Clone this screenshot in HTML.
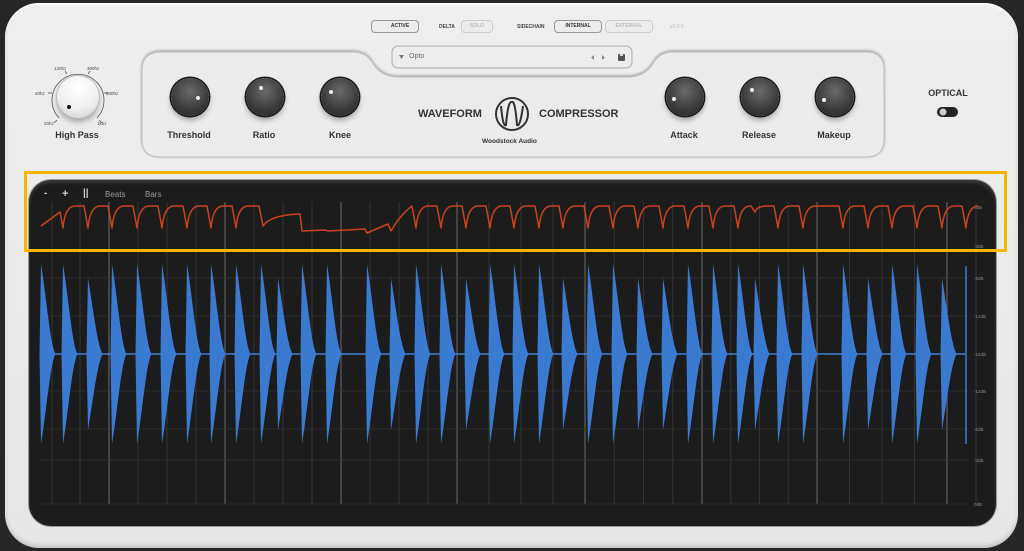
<!DOCTYPE html>
<html><head><meta charset="utf-8">
<style>
html,body{margin:0;padding:0;width:1024px;height:551px;overflow:hidden;background:#262626;font-family:"Liberation Sans",sans-serif}
.abs{position:absolute}
#body{left:5px;top:3px;width:1013px;height:545px;border-radius:34px;background:linear-gradient(#eeeeee,#e6e6e6);box-shadow:inset 0 -3px 4px rgba(0,0,0,.15),inset 0 2px 2px #fff}
.lbl{font-size:9px;font-weight:bold;color:#333;text-align:center;width:80px;margin-left:-40px}
.knob{width:38px;height:38px;border-radius:50%;margin:-19px 0 0 -19px;background:radial-gradient(circle at 50% 35%,#6a6a6a,#3a3a3a 60%,#222);box-shadow:0 0 0 1.5px #1a1a1a,0 4px 6px rgba(0,0,0,.35)}
.dot{position:absolute;width:4px;height:4px;border-radius:50%;background:#eee}
.btn{border:1px solid #999;border-radius:4px;height:11px;font-size:5px;font-weight:bold;color:#333;text-align:center;line-height:11px;background:#ececec}
.small{font-size:5px;font-weight:bold;color:#444}
.hz{font-size:4.5px;color:#444}
</style></head><body>
<div id="body" class="abs"></div>
<svg class="abs" style="left:0;top:0" width="1024" height="551">
 <defs><filter id="sh" x="-5%" y="-20%" width="110%" height="140%"><feDropShadow dx="0" dy="-1" stdDeviation="1.2" flood-color="#000" flood-opacity=".35"/></filter></defs>
 <path d="M162 52 L352 52 Q366 52 372 62 Q380 76 396 77 L630 77 Q646 76 654 62 Q660 52 674 52 L866 52 Q884 52 884 70 L884 140 Q884 157 866 157 L160 157 Q142 157 142 140 L142 70 Q142 52 162 52 Z" fill="#ebebeb" stroke="#bdbdbd" stroke-width="1" filter="url(#sh)"/>
 <rect x="392" y="46" width="240" height="22" rx="6" fill="#ececec" stroke="#aaa" stroke-width="1"/>
 <path d="M399 55 L404 55 L401.5 59 Z" fill="#777"/>
 <path d="M594 55 L591 57.5 L594 60 Z M602 55 L605 57.5 L602 60 Z" fill="#888"/>
 <rect x="618" y="54" width="7" height="7" rx="1" fill="#555"/><rect x="620" y="54" width="3" height="2" fill="#ddd"/>
 <circle cx="512" cy="114" r="16" fill="none" stroke="#333" stroke-width="2"/>
 <path d="M501 106 Q503 128 506 125 Q508 100 512 102 Q515 100 517 125 Q520 128 523 106" fill="none" stroke="#333" stroke-width="2"/>
 <path d="M59 118 A26 26 0 1 1 97 118" fill="none" stroke="#555" stroke-width="0.8"/>
 <g stroke="#555" stroke-width="0.8"><line x1="57" y1="120" x2="54" y2="123"/><line x1="52" y1="93" x2="48" y2="93"/><line x1="67" y1="74" x2="65" y2="71"/><line x1="88" y1="74" x2="90" y2="71"/><line x1="104" y1="93" x2="108" y2="93"/><line x1="99" y1="120" x2="102" y2="123"/></g>
 <rect x="937" y="107" width="21" height="10" rx="5" fill="#222"/><circle cx="943" cy="112" r="3.5" fill="#ccc"/>
 <path d="M376.5 24.5 A3.2 3.2 0 1 0 380.5 24.5 M378.5 23 L378.5 27" fill="none" stroke="#e0533a" stroke-width="1"/>
</svg>
<div class="abs btn" style="left:371px;top:20px;width:46px;text-indent:10px">ACTIVE</div>
<div class="abs small" style="left:439px;top:24px">DELTA</div>
<div class="abs btn" style="left:461px;top:20px;width:30px;color:#bbb;border-color:#ccc">SOLO</div>
<div class="abs small" style="left:517px;top:24px">SIDECHAIN</div>
<div class="abs btn" style="left:554px;top:20px;width:46px">INTERNAL</div>
<div class="abs btn" style="left:605px;top:20px;width:46px;color:#bbb;border-color:#ccc">EXTERNAL</div>
<div class="abs small" style="left:670px;top:24px;color:#bbb;font-weight:normal">v1.0.9</div>
<div class="abs" style="left:409px;top:53px;font-size:7px;color:#666">Opto</div>
<div class="abs" style="left:418px;top:108px;font-size:11px;font-weight:bold;color:#333">WAVEFORM</div>
<div class="abs" style="left:539px;top:108px;font-size:11px;font-weight:bold;color:#333">COMPRESSOR</div>
<div class="abs" style="left:482px;top:138px;font-size:6.5px;font-weight:bold;color:#333">Woodstock Audio</div>
<div class="abs" style="left:57px;top:76px;width:42px;height:42px;border-radius:50%;background:radial-gradient(circle at 50% 30%,#fff,#f0f0f0 55%,#c8c8c8);box-shadow:0 0 0 1px #bbb,0 4px 6px rgba(0,0,0,.3)"><div class="dot" style="left:10px;top:29px;background:#111"></div></div>
<div class="abs hz" style="left:44px;top:121px">20hz</div>
<div class="abs hz" style="left:35px;top:91px">40hz</div>
<div class="abs hz" style="left:54px;top:66px">120hz</div>
<div class="abs hz" style="left:87px;top:66px">300hz</div>
<div class="abs hz" style="left:106px;top:91px">500hz</div>
<div class="abs hz" style="left:97px;top:121px">1khz</div>
<div class="abs lbl" style="left:77px;top:130px">High Pass</div>
<div class="abs" style="left:190px;top:97px"><div class="knob" style="position:relative"><div class="dot" style="left:25px;top:18px"></div></div></div>
<div class="abs" style="left:265px;top:97px"><div class="knob" style="position:relative"><div class="dot" style="left:13px;top:8px"></div></div></div>
<div class="abs" style="left:340px;top:97px"><div class="knob" style="position:relative"><div class="dot" style="left:8px;top:12px"></div></div></div>
<div class="abs" style="left:685px;top:97px"><div class="knob" style="position:relative"><div class="dot" style="left:6px;top:19px"></div></div></div>
<div class="abs" style="left:760px;top:97px"><div class="knob" style="position:relative"><div class="dot" style="left:9px;top:10px"></div></div></div>
<div class="abs" style="left:835px;top:97px"><div class="knob" style="position:relative"><div class="dot" style="left:6px;top:20px"></div></div></div>
<div class="abs lbl" style="left:189px;top:130px">Threshold</div>
<div class="abs lbl" style="left:264px;top:130px">Ratio</div>
<div class="abs lbl" style="left:340px;top:130px">Knee</div>
<div class="abs lbl" style="left:684px;top:130px">Attack</div>
<div class="abs lbl" style="left:759px;top:130px">Release</div>
<div class="abs lbl" style="left:834px;top:130px">Makeup</div>
<div class="abs lbl" style="left:948px;top:88px">OPTICAL</div>
<div class="abs" style="left:29px;top:180px;width:967px;height:346px;border-radius:22px;background:#1c1c1c;box-shadow:inset 0 3px 3px rgba(255,255,255,.12),0 0 0 1px #999"></div>
<svg id="disp" class="abs" style="left:0;top:0" width="1024" height="551"></svg>
<div class="abs" style="left:44px;top:188px;font-size:10px;color:#ccc;font-weight:bold">-</div>
<div class="abs" style="left:62px;top:188px;font-size:11px;color:#ccc;font-weight:bold">+</div>
<div class="abs" style="left:83px;top:188px;font-size:10px;color:#ccc;font-weight:bold">||</div>
<div class="abs" style="left:105px;top:190px;font-size:8px;color:#999">Beats</div>
<div class="abs" style="left:145px;top:190px;font-size:8px;color:#999">Bars</div>
<div class="abs" style="left:24px;top:171px;width:977px;height:75px;border:3px solid #f6b600"></div>
<script>
var s=document.getElementById('disp'),h='';
var maj=[109,225,341,457,585,702,817,947],v=[];
for(var i=0;i<maj.length-1;i++){for(var k=0;k<4;k++)v.push([maj[i]+(maj[i+1]-maj[i])*k/4,k==0]);}
v.push([947,true]);v.unshift([80,false]);v.unshift([52,false]);v.push([976,false]);
v.forEach(function(a){h+='<line x1="'+a[0]+'" y1="202" x2="'+a[0]+'" y2="504" stroke="'+(a[1]?'#5a5a5a':'#333')+'" stroke-width="'+(a[1]?1.3:1)+'"/>';});
[278,316,391,429,460,504].forEach(function(y){h+='<line x1="40" y1="'+y+'" x2="968" y2="'+y+'" stroke="#333" stroke-width="0.8"/>';});
var lab=[[278,'-6dB'],[316,'-12dB'],[354,'-18dB'],[391,'-12dB'],[429,'-6dB'],[460,'-3dB'],[504,'0dB'],[207,'0dB'],[246,'-3dB']];
lab.forEach(function(l){h+='<text x="974" y="'+(l[0]+2)+'" font-size="4.5" fill="#888" font-family="Liberation Sans">'+l[1]+'</text>';});
var b=[41,63,88,112,137,162,187,211,236,261,278,302,327,367,391,416,441,466,490,514,539,563,588,613,638,663,688,713,738,755,778,803,843,868,892,917,942];
var small={88:1,278:1,391:1,466:1,563:1,638:1,663:1,755:1,868:1,942:1};
var p='';
b.forEach(function(x){var a=small[x]?76:90;var c=354;
 p+='M'+(x-1.5)+' '+c+' L'+x+' '+(c-a)+' C'+(x+5)+' '+(c-a+30)+' '+(x+9)+' '+(c-12)+' '+(x+14)+' '+(c-1)+' L'+(x+14)+' '+(c+1)+' C'+(x+9)+' '+(c+12)+' '+(x+5)+' '+(c+a-30)+' '+x+' '+(c+a)+' Z ';});
h+='<line x1="40" y1="354" x2="966" y2="354" stroke="#3f7fd0" stroke-width="1.5"/>';
h+='<path d="'+p+'" fill="#3a7ad0"/>';
h+='<line x1="966" y1="266" x2="966" y2="444" stroke="#3a7ad0" stroke-width="1.5"/>';
var T=206,L=228;
var hits=[63,88,112,137,162,187,211,236];
var e='M41 226 L60 212 L63 228 ';
hits.forEach(function(x,i){var nx=i<hits.length-1?hits[i+1]:263;
 e+='Q'+(x+2)+' '+T+' '+(x+12)+' '+T+' L'+(nx-4)+' '+T+' L'+nx+' '+(i<hits.length-1?L:226)+' ';});
e+='Q270 215 300 214 L302 231 L325 230 L328 231 L365 229 L367 233 L388 224 L391 231 Q400 215 412 206 ';
var h2=[416,441,466,490,514,539,563,588,613,638,663,688,713,738,755,778,803,843,868,892,917,942,966];
h2.forEach(function(x,i){var dy=(x==755)?212:L;
 e+='L'+(x-4)+' '+T+' L'+x+' '+dy+' Q'+(x+2)+' '+T+' '+(x+12)+' '+T+' ';});
h+='<path d="'+e+'" fill="none" stroke="#c9421c" stroke-width="1.5" stroke-linejoin="round"/>';
s.innerHTML=h;
</script>
</body></html>
